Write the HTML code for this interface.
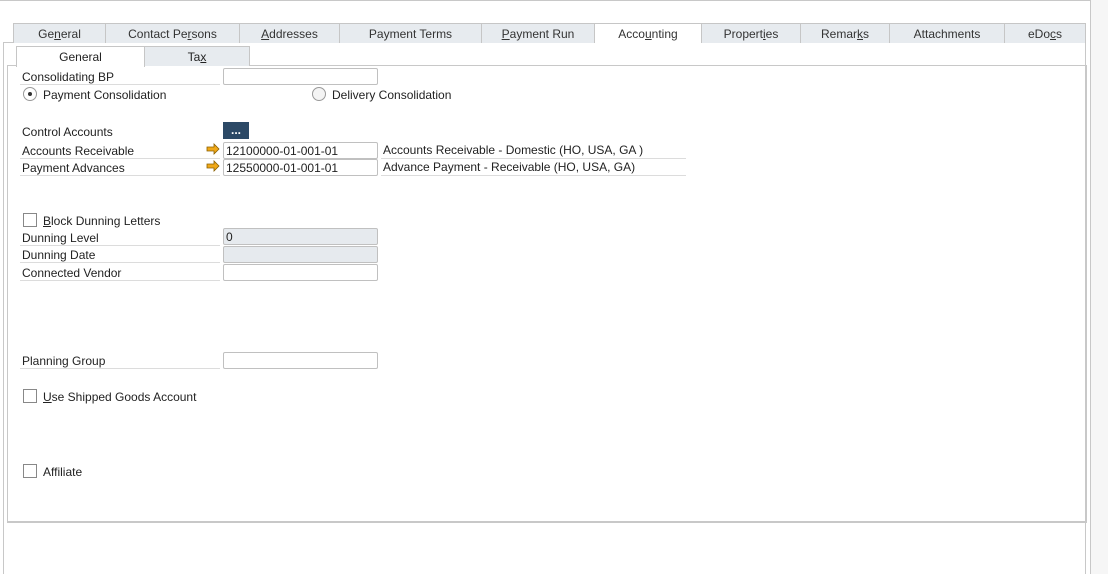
<!DOCTYPE html>
<html><head><style>
*{box-sizing:border-box;margin:0;padding:0}
body{width:1108px;height:574px;background:#fff;font-family:"Liberation Sans",sans-serif;font-size:12px;color:#222;position:relative;overflow:hidden}
.a{position:absolute}
.tab{position:absolute;top:23px;height:20px;background:#e7ebef;border:1px solid #c6c6c6;border-bottom:none;text-align:center;line-height:20px;color:#333}
.tab.act{background:#fff;height:20px}
.itab{position:absolute;top:46px;height:20px;background:#e7ebef;border:1px solid #c6c6c6;border-bottom:none;text-align:center;line-height:20px}
.lbl{position:absolute;left:20px;width:200px;border-bottom:1px solid #dcdcdc;padding-left:2px;height:17px;line-height:18px}
.inp{position:absolute;left:223px;width:155px;height:17px;border:1px solid #c0c0c0;background:#fff;padding-left:2px;line-height:16px;border-radius:2px}
.gray{background:#e6eaee}
.cb{position:absolute;left:23px;width:14px;height:14px;border:1px solid #888;background:#fff}
.txt{position:absolute;line-height:16px}
.desc{position:absolute;left:381px;width:305px;border-bottom:1px solid #dcdcdc;height:17px;line-height:17px;padding-left:2px}
.arr{position:absolute;left:206px}
</style></head><body>
<div class="a" style="left:0;top:0;width:1108px;height:1px;background:#c8c8c8"></div>
<div class="a" style="left:1090px;top:0;width:1px;height:574px;background:#c8c8c8"></div>
<div class="a" style="left:1091px;top:0;width:17px;height:574px;background:#f6f6f6"></div>
<div class="a" style="left:3px;top:42px;width:1px;height:532px;background:#c8c8c8"></div>
<div class="a" style="left:3px;top:42px;width:1083px;height:1px;background:#c8c8c8"></div>
<div class="a" style="left:1085px;top:42px;width:1px;height:532px;background:#c8c8c8"></div>

<div class="tab" style="left:13px;width:93px">Ge<u>n</u>eral</div>
<div class="tab" style="left:105px;width:135px">Contact Pe<u>r</u>sons</div>
<div class="tab" style="left:239px;width:101px"><u>A</u>ddresses</div>
<div class="tab" style="left:339px;width:143px">Payment Terms</div>
<div class="tab" style="left:481px;width:114px"><u>P</u>ayment Run</div>
<div class="tab act" style="left:594px;width:108px">Acco<u>u</u>nting</div>
<div class="tab" style="left:701px;width:100px">Propert<u>i</u>es</div>
<div class="tab" style="left:800px;width:90px">Remar<u>k</u>s</div>
<div class="tab" style="left:889px;width:116px">Attachments</div>
<div class="tab" style="left:1004px;width:82px">eDo<u>c</u>s</div>

<div class="a" style="left:7px;top:65px;width:1080px;height:458px;border:1px solid #c8c8c8;border-bottom:2px solid #c8c8c8"></div>
<div class="itab" style="left:16px;width:129px;background:#fff;height:21px">General</div>
<div class="itab" style="left:144px;width:106px">Ta<u>x</u></div>

<div class="lbl" style="top:68px">Consolidating BP</div>
<div class="inp" style="top:68px"></div>
<div class="a" style="left:23px;top:87px;width:14px;height:14px;border:1px solid #999;border-radius:50%;background:#fff"><div class="a" style="left:4px;top:4px;width:4px;height:4px;border-radius:50%;background:#333"></div></div>
<div class="txt" style="left:43px;top:87px">Payment Consolidation</div>
<div class="a" style="left:312px;top:87px;width:14px;height:14px;border:1px solid #999;border-radius:50%;background:#f4f4f4"></div>
<div class="txt" style="left:332px;top:87px">Delivery Consolidation</div>

<div class="txt" style="left:22px;top:124px">Control Accounts</div>
<div class="a" style="left:223px;top:122px;width:26px;height:17px;background:#2c4966;color:#fff;text-align:center;line-height:17px;font-weight:bold">...</div>

<div class="lbl" style="top:142px">Accounts Receivable</div>
<svg class="arr" style="top:143px" width="14" height="12"><path d="M1 4h7V1l5 5-5 5V8H1z" fill="#f0a818" stroke="#8a6000" stroke-width="0.8"/></svg>
<div class="inp" style="top:142px">12100000-01-001-01</div>
<div class="desc" style="top:142px">Accounts Receivable - Domestic (HO, USA, GA )</div>
<div class="lbl" style="top:159px">Payment Advances</div>
<svg class="arr" style="top:160px" width="14" height="12"><path d="M1 4h7V1l5 5-5 5V8H1z" fill="#f0a818" stroke="#8a6000" stroke-width="0.8"/></svg>
<div class="inp" style="top:159px">12550000-01-001-01</div>
<div class="desc" style="top:159px">Advance Payment - Receivable (HO, USA, GA)</div>

<div class="cb" style="top:213px"></div>
<div class="txt" style="left:43px;top:213px"><u>B</u>lock Dunning Letters</div>
<div class="lbl" style="top:229px">Dunning Level</div>
<div class="inp gray" style="top:228px">0</div>
<div class="lbl" style="top:246px">Dunning Date</div>
<div class="inp gray" style="top:246px"></div>
<div class="lbl" style="top:264px">Connected Vendor</div>
<div class="inp" style="top:264px"></div>

<div class="lbl" style="top:352px">Planning Group</div>
<div class="inp" style="top:352px"></div>

<div class="cb" style="top:389px"></div>
<div class="txt" style="left:43px;top:389px"><u>U</u>se Shipped Goods Account</div>
<div class="cb" style="top:464px"></div>
<div class="txt" style="left:43px;top:464px">Affiliate</div>
</body></html>
